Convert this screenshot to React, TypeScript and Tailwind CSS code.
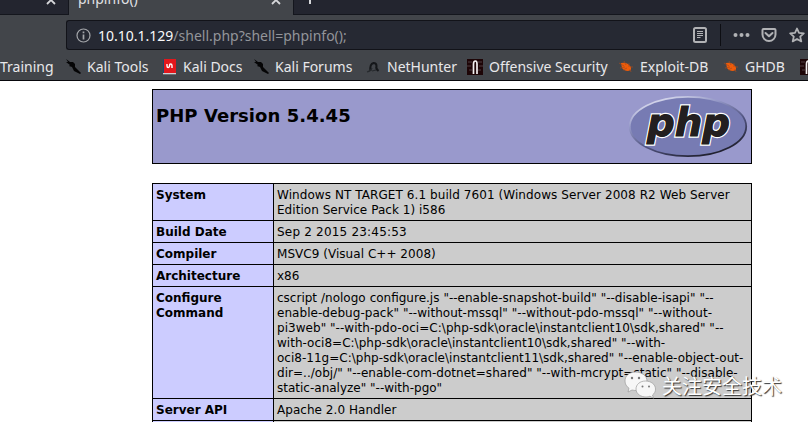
import React from 'react';

type Kind = 'dragon' | 'book' | 'hunter' | 'security' | 'bug';

function BookmarkIcon({ kind }: { kind: Kind }) {
  return (
    <svg className="block h-4 w-4 shrink-0" viewBox="0 0 16 16">
      {kind === 'dragon' && (
        <path d="M1 0l4 3 3 0 2 2 0 3 2 2 4 4-1 1-4-2-2-1-2-4-3-1 1-1-4-3 2 0z" fill="#050506" />
      )}
      {kind === 'book' && (
        <>
          <path d="M2 1l1-1v15H2z" fill="#1d4770" />
          <rect x="3" y="0" width="12" height="14" fill="#e3171c" />
          <rect x="2" y="14" width="13" height="1.3" fill="#cfd1d5" />
          <path d="M6 5v2q0 1.500 1.200 1.500T8.500 7V6.500q0-1.500 1.200-1.500T11 6.500V9" fill="none" stroke="#fff" strokeWidth="1.4" />
        </>
      )}
      {kind === 'hunter' && (
        <>
          <path d="M5.500 12q-1-7 3-8 3 0 3 3-1 3 2 5" fill="none" stroke="#15171a" strokeWidth="2" />
          <path d="M2 13q4-1 5-4M7 12l4-1" fill="none" stroke="#26292d" strokeWidth="1.200" />
        </>
      )}
      {kind === 'security' && (
        <>
          <rect width="16" height="16" fill="#1d0507" />
          <path d="M1 3h4M0 7h4M2 11h3M11 3h4M12 7h4M11 11h3" stroke="#513f42" strokeWidth="1.2" />
          <path d="M6.500 15V5q0-3 2-3 1.500 0 1.500 3v10" fill="none" stroke="#f1eeee" strokeWidth="1.700" />
        </>
      )}
      {kind === 'bug' && (
        <>
          <path d="M3 4q4-1 7 1l3 3 0 3-3 1q-4 0-6-3z" fill="#ee5b09" />
          <path d="M1 4l5 3M2 9l5-1M6 2l2 4M11 4v4M12 8l3 0M12 10l1 3M5 11l4-2" stroke="#a24a20" strokeWidth="0.7" />
        </>
      )}
    </svg>
  );
}

const bookmarks: { label: string; kind: Kind; width: string }[] = [
  { label: 'Kali Tools', kind: 'dragon', width: 'w-[96px]' },
  { label: 'Kali Docs', kind: 'book', width: 'w-[92px]' },
  { label: 'Kali Forums', kind: 'dragon', width: 'w-[112px]' },
  { label: 'NetHunter', kind: 'hunter', width: 'w-[102px]' },
  { label: 'Offensive Security', kind: 'security', width: 'w-[151px]' },
  { label: 'Exploit-DB', kind: 'bug', width: 'w-[105px]' },
  { label: 'GHDB', kind: 'bug', width: 'w-[77px]' },
  { label: '', kind: 'security', width: 'w-[96px]' },
];

const rows: { name: string[]; value: [string, string][] }[] = [
  {
    name: ['System'],
    value: [
      ['Windows NT TARGET 6.1 build 7601 (Windows Server 2008 R2 Web Server', 'tracking-[0.075px]'],
      ['Edition Service Pack 1) i586', 'tracking-[0.04px]'],
    ],
  },
  { name: ['Build Date'], value: [['Sep 2 2015 23:45:53', 'tracking-[0.2px]']] },
  { name: ['Compiler'], value: [['MSVC9 (Visual C++ 2008)', 'tracking-[0.04px]']] },
  { name: ['Architecture'], value: [['x86', 'tracking-normal']] },
  {
    name: ['Configure', 'Command'],
    value: [
      ['cscript /nologo configure.js "--enable-snapshot-build" "--disable-isapi" "--', '[word-spacing:0.17px]'],
      ['enable-debug-pack" "--without-mssql" "--without-pdo-mssql" "--without-', 'tracking-[0.045px]'],
      ['pi3web" "--with-pdo-oci=C:\\php-sdk\\oracle\\instantclient10\\sdk,shared" "--', 'tracking-[0.04px]'],
      ['with-oci8=C:\\php-sdk\\oracle\\instantclient10\\sdk,shared" "--with-', 'tracking-[0.016px]'],
      ['oci8-11g=C:\\php-sdk\\oracle\\instantclient11\\sdk,shared" "--enable-object-out-', 'tracking-[0.014px]'],
      ['dir=../obj/" "--enable-com-dotnet=shared" "--with-mcrypt=static" "--disable-', 'tracking-[0.03px]'],
      ['static-analyze" "--with-pgo"', 'tracking-normal'],
    ],
  },
  { name: ['Server API'], value: [['Apache 2.0 Handler', 'tracking-[0.04px]']] },
  { name: [''], value: [['', 'tracking-normal']] },
];

function CloseIcon() {
  return (
    <svg className="block h-[10px] w-[10px]" viewBox="0 0 10 10">
      <path d="M1 1l8 8M9 1L1 9" stroke="#d6d7da" strokeWidth="1.8" />
    </svg>
  );
}

function PhpLogo() {
  return (
    <svg className="mt-[5px] mr-[3px] block h-[63px] w-[120px]" viewBox="0 0 120 63">
      <defs>
        <linearGradient id="rim" x1="0.2" y1="0" x2="0.8" y2="1">
          <stop offset="0" stopColor="#e4e5f4" />
          <stop offset="0.3" stopColor="#9296c5" />
          <stop offset="0.6" stopColor="#50537f" />
          <stop offset="1" stopColor="#17161f" />
        </linearGradient>
      </defs>
      <ellipse cx="60" cy="31.5" rx="58.2" ry="29.7" fill="#777bb3" stroke="url(#rim)" strokeWidth="1.8" />
      <text
        x="19"
        y="40.5"
        textLength="83"
        lengthAdjust="spacingAndGlyphs"
        className="font-['DejaVu_Sans',sans-serif] text-[39px] font-bold italic"
        fill="#231f20"
        stroke="#fff"
        strokeWidth="3.4"
        paintOrder="stroke"
      >
        php
      </text>
      <text
        x="19"
        y="40.5"
        textLength="83"
        lengthAdjust="spacingAndGlyphs"
        aria-hidden="true"
        className="font-['DejaVu_Sans',sans-serif] text-[39px] font-bold italic"
        fill="#231f20"
        stroke="#231f20"
        strokeWidth="1"
      >
        php
      </text>
    </svg>
  );
}

function Watermark() {
  return (
    <div className="absolute top-[371px] left-[624px] flex items-center gap-[5px]">
      <svg className="block h-[30px] w-[33px]" viewBox="0 0 33 30">
        <path d="M11.5 1C5 1 1 5 1 10c0 3 1.4 5.400 4 7.200L4 21l4-2c8 2 15-2 15-9 0-5-5-9-11.500-9z" fill="#f7f7f7" stroke="#9b9b9b" strokeWidth="0.7" />
        <path d="M21.500 10C16 10 12 13.500 12 18c0 5 5 8 10 8 1.600 0 3-.3 4-.8l3.500 2-1-3.200c2-1.500 3-3.500 3-6 0-4.500-4.500-8-10-8z" fill="#f7f7f7" stroke="#9b9b9b" strokeWidth="0.7" />
        <g fill="#777">
          <circle cx="8" cy="7" r="1.200" />
          <circle cx="15" cy="7" r="1.200" />
          <circle cx="18.500" cy="15.500" r="1" />
          <circle cx="25" cy="15.500" r="1" />
        </g>
      </svg>
      <span className="font-['Noto_Sans_CJK_SC',sans-serif] text-[20px] leading-[30px] whitespace-nowrap text-white [text-shadow:1px_1px_1px_#333]">
        关注安全技术
      </span>
    </div>
  );
}

export default function App() {
  return (
    <div className="relative flex h-[422px] w-[808px] flex-col overflow-hidden bg-white">
      <header className="flex h-[81px] shrink-0 flex-col border-b border-[#08080c] bg-[#42454a] font-['Noto_Sans',sans-serif]">
        <div className="flex h-[15px] shrink-0 overflow-hidden text-[#e0e1e4]">
          <div className="flex w-[69px] justify-end border-r border-b border-[#14161d] bg-[#23252f] pr-[12px]">
            <div className="-mt-[5px]"><CloseIcon /></div>
          </div>
          <div className="flex w-[224px] justify-between pr-[12px] pl-[9px]">
            <span className="-mt-[11px] text-[14px] leading-5">phpinfo()</span>
            <div className="-mt-[5px]"><CloseIcon /></div>
          </div>
          <div className="flex flex-1 border-b border-l border-[#14161d] bg-[#23252f] pl-[15px]">
            <div className="h-[4px] w-[2px] bg-[#d6d7da]" />
          </div>
        </div>
        <div className="flex h-[40px] shrink-0 pt-[5px] pl-[66px]">
          <div className="flex h-[30px] flex-1 items-center rounded-l-[3px] border border-r-0 border-[#121319] bg-[#262933] pl-[9px]">
            <svg className="block h-[15px] w-[15px]" viewBox="0 0 15 15">
              <circle cx="7.500" cy="7.500" r="6.500" fill="none" stroke="#a4a6aa" strokeWidth="1.200" />
              <path d="M7.500 6.500v5M7.500 3.500v1.700" stroke="#a4a6aa" strokeWidth="1.700" />
            </svg>
            <span className="ml-[7px] flex-1 pt-[2px] text-[14px] leading-5 whitespace-nowrap text-[#93959a]">
              <span className="text-[#f9f9fa]">10.10.1.129</span>/shell.php?shell=phpinfo();
            </span>
            <svg className="block h-[16px] w-[14px]" viewBox="0 0 14 16">
              <rect x="1" y="1" width="12" height="14" rx="1.500" fill="none" stroke="#b1b2b5" strokeWidth="2" />
              <path d="M4 4.500h6M4 6.500h6M4 8.500h6M4 10.500h3.500" stroke="#b1b2b5" />
            </svg>
            <div className="ml-[13px] h-[22px] w-px bg-[#0d0e13]" />
            <svg className="ml-[12px] block h-[16px] w-[17px]" viewBox="0 0 17 16">
              <g fill="#b1b2b5">
                <circle cx="2.500" cy="8" r="2" />
                <circle cx="8.500" cy="8" r="2" />
                <circle cx="14.500" cy="8" r="2" />
              </g>
            </svg>
            <svg className="ml-[11px] block h-[16px] w-[16px]" viewBox="0 0 16 16">
              <path d="M2.500 2h11q1 0 1 1v4.500a6.500 6.500 0 01-13 0V3q0-1 1-1z" fill="none" stroke="#b1b2b5" strokeWidth="2" />
              <path d="M4.500 6L8 9.300 11.500 6" fill="none" stroke="#b1b2b5" strokeWidth="2" strokeLinecap="round" strokeLinejoin="round" />
            </svg>
            <svg className="mr-[3px] ml-[12px] block h-[16px] w-[16px] shrink-0" viewBox="0 0 16 16">
              <path d="M8 1.500l2 4.400 4.800.5-3.600 3.200 1.100 4.800L8 12l-4.300 2.400 1.100-4.800L1.200 6.400 6 5.900z" fill="none" stroke="#b1b2b5" strokeWidth="1.800" strokeLinejoin="round" />
            </svg>
          </div>
        </div>
        <nav className="flex h-[24px] items-center overflow-hidden text-[14px] leading-5 whitespace-nowrap text-[#e8e8ea]">
          <span className="w-[65px] shrink-0">Training</span>
          {bookmarks.map((item, index) => (
            <div key={index} className={`flex shrink-0 items-center gap-[6px] ${item.width}`}>
              <BookmarkIcon kind={item.kind} />
              <span>{item.label}</span>
            </div>
          ))}
        </nav>
      </header>

      <main className="ml-[152px] flex w-[600px] flex-col pt-[8px] font-['DejaVu_Sans',sans-serif] text-black">
        <div className="flex h-[75px] shrink-0 items-start justify-between border border-black bg-[#9999cc] pl-[3px]">
          <h1 className="mt-[15px] text-[18px] leading-[22px] font-bold tracking-[0.05px]">PHP Version 5.4.45</h1>
          <PhpLogo />
        </div>
        <div className="mt-[19px] flex flex-col border border-b-0 border-black text-[12px] leading-[15px]">
          {rows.map((row, index) => (
            <div key={index} className="flex border-b border-black">
              <div className="w-[121px] shrink-0 border-r border-black bg-[#ccccff] px-[3px] pt-[4px] pb-[2px] font-bold">
                {row.name.map((line, i) => <div key={i} className="min-h-[15px]">{line}</div>)}
              </div>
              <div className="flex-1 bg-[#cccccc] px-[3px] pt-[4px] pb-[2px] whitespace-nowrap">
                {row.value.map(([line, tracking], i) => (
                  <div key={i} className={`min-h-[15px] ${tracking}`}>{line}</div>
                ))}
              </div>
            </div>
          ))}
        </div>
      </main>
      <Watermark />
    </div>
  );
}
